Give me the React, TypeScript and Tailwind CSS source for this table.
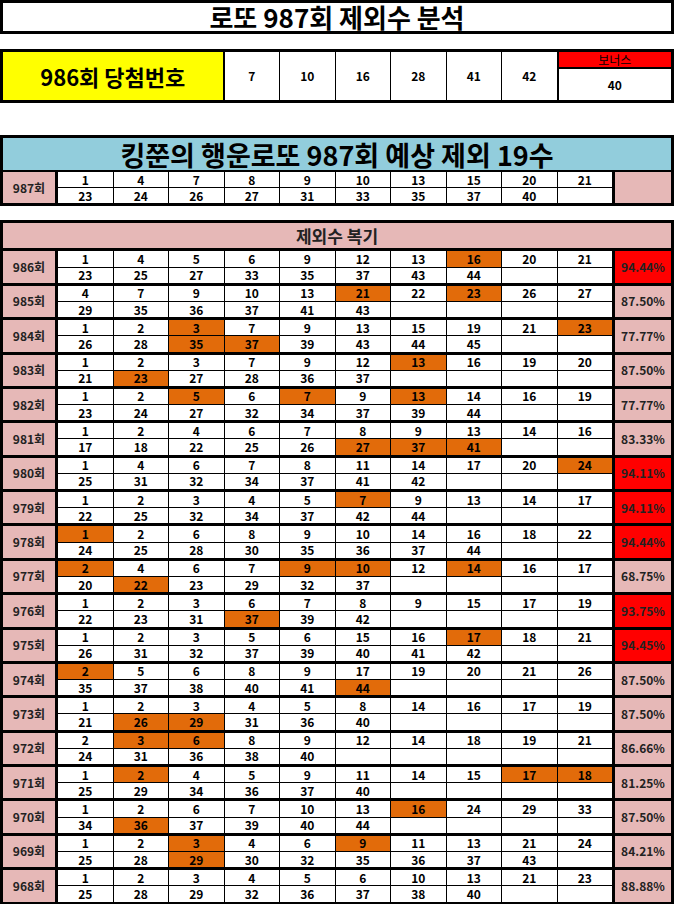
const font = { fontFamily: '"Noto Sans CJK KR", "Noto Sans", sans-serif' };

type Round = {
  label: string;
  a: number[];
  b: number[];
  hi?: number[];
  pct: string;
  red?: boolean;
};

const rounds: Round[] = [
  { label: "986회", a: [1, 4, 5, 6, 9, 12, 13, 16, 20, 21], b: [23, 25, 27, 33, 35, 37, 43, 44], hi: [16], pct: "94.44%", red: true },
  { label: "985회", a: [4, 7, 9, 10, 13, 21, 22, 23, 26, 27], b: [29, 35, 36, 37, 41, 43], hi: [21, 23], pct: "87.50%" },
  { label: "984회", a: [1, 2, 3, 7, 9, 13, 15, 19, 21, 23], b: [26, 28, 35, 37, 39, 43, 44, 45], hi: [3, 23, 35, 37], pct: "77.77%" },
  { label: "983회", a: [1, 2, 3, 7, 9, 12, 13, 16, 19, 20], b: [21, 23, 27, 28, 36, 37], hi: [13, 23], pct: "87.50%" },
  { label: "982회", a: [1, 2, 5, 6, 7, 9, 13, 14, 16, 19], b: [23, 24, 27, 32, 34, 37, 39, 44], hi: [5, 7, 13], pct: "77.77%" },
  { label: "981회", a: [1, 2, 4, 6, 7, 8, 9, 13, 14, 16], b: [17, 18, 22, 25, 26, 27, 37, 41], hi: [27, 37, 41], pct: "83.33%" },
  { label: "980회", a: [1, 4, 6, 7, 8, 11, 14, 17, 20, 24], b: [25, 31, 32, 34, 37, 41, 42], hi: [24], pct: "94.11%", red: true },
  { label: "979회", a: [1, 2, 3, 4, 5, 7, 9, 13, 14, 17], b: [22, 25, 32, 34, 37, 42, 44], hi: [7], pct: "94.11%", red: true },
  { label: "978회", a: [1, 2, 6, 8, 9, 10, 14, 16, 18, 22], b: [24, 25, 28, 30, 35, 36, 37, 44], hi: [1], pct: "94.44%", red: true },
  { label: "977회", a: [2, 4, 6, 7, 9, 10, 12, 14, 16, 17], b: [20, 22, 23, 29, 32, 37], hi: [2, 9, 10, 14, 22], pct: "68.75%" },
  { label: "976회", a: [1, 2, 3, 6, 7, 8, 9, 15, 17, 19], b: [22, 23, 31, 37, 39, 42], hi: [37], pct: "93.75%", red: true },
  { label: "975회", a: [1, 2, 3, 5, 6, 15, 16, 17, 18, 21], b: [26, 31, 32, 37, 39, 40, 41, 42], hi: [17], pct: "94.45%", red: true },
  { label: "974회", a: [2, 5, 6, 8, 9, 17, 19, 20, 21, 26], b: [35, 37, 38, 40, 41, 44], hi: [2, 44], pct: "87.50%" },
  { label: "973회", a: [1, 2, 3, 4, 5, 8, 14, 16, 17, 19], b: [21, 26, 29, 31, 36, 40], hi: [26, 29], pct: "87.50%" },
  { label: "972회", a: [2, 3, 6, 8, 9, 12, 14, 18, 19, 21], b: [24, 31, 36, 38, 40], hi: [3, 6], pct: "86.66%" },
  { label: "971회", a: [1, 2, 4, 5, 9, 11, 14, 15, 17, 18], b: [25, 29, 34, 36, 37, 40], hi: [2, 17, 18], pct: "81.25%" },
  { label: "970회", a: [1, 2, 6, 7, 10, 13, 16, 24, 29, 33], b: [34, 36, 37, 39, 40, 44], hi: [16, 36], pct: "87.50%" },
  { label: "969회", a: [1, 2, 3, 4, 6, 9, 11, 13, 21, 24], b: [25, 28, 29, 30, 32, 35, 36, 37, 43], hi: [3, 9, 29], pct: "84.21%" },
  { label: "968회", a: [1, 2, 3, 4, 5, 6, 10, 13, 21, 23], b: [25, 28, 29, 32, 36, 37, 38, 40], pct: "88.88%" },
];

const pad = (list: number[]) => [...list, ...Array(10 - list.length).fill(null)];

function Block({ label, a, b, hi = [], pct, red }: Round) {
  const cell = (n: number | null, i: number) => (
    <div
      key={i}
      className={`flex items-center justify-center text-[12px] font-bold leading-none text-black ${
        n !== null && hi.includes(n) ? "bg-[#e26b0a]" : "bg-white"
      }`}
    >
      {n}
    </div>
  );

  return (
    <div className="grid grid-cols-[54px_repeat(10,minmax(0,1fr))_58px] grid-rows-[15.2px_15.2px] gap-px">
      <div className="row-span-2 mr-[2px] flex items-center justify-center bg-[#e6b8b7] text-[12px] font-bold leading-none text-[#222]">
        {label}
      </div>
      {pad(a).map(cell)}
      <div
        className={`row-span-2 ml-[2px] flex items-center justify-center text-[12px] font-bold leading-none text-[#222] ${
          red ? "bg-[#ff0000]" : "bg-[#e6b8b7]"
        }`}
      >
        {pct}
      </div>
      {pad(b).map((n, i) => cell(n, i + 10))}
    </div>
  );
}

export default function App() {
  const winning = [7, 10, 16, 28, 41, 42];

  return (
    <div className="w-[674px] bg-white" style={font}>
      <div className="flex h-[34px] items-center justify-center border-[3px] border-black">
        <span className="text-[26px] font-bold leading-none text-black">로또 987회 제외수 분석</span>
      </div>

      {/* 당첨번호 */}
      <div className="mt-[15px] grid h-[54px] grid-cols-[54px_repeat(10,minmax(0,1fr))_58px] gap-px border-[3px] border-black bg-black">
        <div className="col-span-4 mr-[1px] flex items-center justify-center bg-[#ffff00] text-[22px] font-bold leading-none text-black">
          986회 당첨번호
        </div>
        {winning.map((n) => (
          <div key={n} className="flex items-center justify-center bg-white text-[12px] font-bold leading-none text-black">
            {n}
          </div>
        ))}
        <div className="col-span-2 ml-[1px] flex flex-col gap-[2px]">
          <div className="flex h-[15px] items-center justify-center bg-[#ff0000] text-[12px] leading-none text-black">
            보너스
          </div>
          <div className="flex flex-1 items-center justify-center bg-white text-[12px] font-bold leading-none text-black">
            40
          </div>
        </div>
      </div>

      {/* 예상 제외수 */}
      <div className="mt-[32px] flex flex-col gap-[2px] border-[3px] border-black bg-black">
        <div className="flex h-[32px] items-center justify-center bg-[#92cddc]">
          <span className="text-[27px] font-bold leading-none text-black">킹쭌의 행운로또 987회 예상 제외 19수</span>
        </div>
        <Block
          label="987회"
          a={[1, 4, 7, 8, 9, 10, 13, 15, 20, 21]}
          b={[23, 24, 26, 27, 31, 33, 35, 37, 40]}
          pct=""
        />
      </div>

      {/* 제외수 복기 */}
      <div className="mt-[14px] flex flex-col gap-[3px] border-[3px] border-b-[2px] border-black bg-black">
        <div className="flex h-[25px] items-center justify-center bg-[#e6b8b7]">
          <span className="text-[17px] font-bold leading-none text-[#222]">제외수 복기</span>
        </div>
        {rounds.map((r) => (
          <Block key={r.label} {...r} />
        ))}
      </div>
    </div>
  );
}
